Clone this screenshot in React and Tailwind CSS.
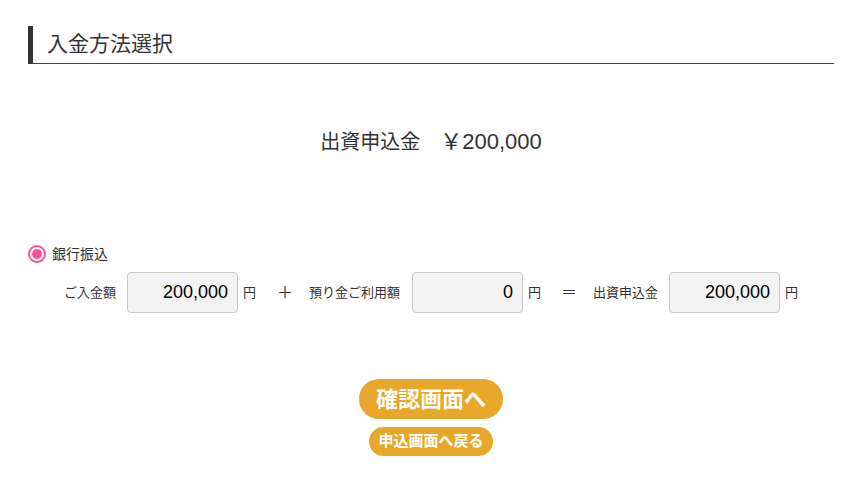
import React from 'react';

const font = { fontFamily: '"Liberation Sans", "Noto Sans CJK JP", sans-serif' };

const AmountBox = ({ value }) => (
  <div className="w-[111px] h-[41px] rounded-[4px] border border-[#c9c9c9] bg-[#f3f3f3] flex items-center justify-end pr-[9px] text-[18px] text-black">
    {value}
  </div>
);

const App = () => {
  return (
    <div className="min-h-screen bg-white text-[#333] pl-[28px] pr-[25px] pt-[26px]" style={font}>
      {/* 見出し */}
      <h1 className="border-l-[5px] border-b border-[#333] border-b-[#444] pl-[14px] h-[38px] flex items-center text-[21px] leading-none pb-[2px]">
        入金方法選択
      </h1>

      {/* 金額 */}
      <p className="mt-[64px] text-center text-[20px] leading-[28px]">
        出資申込金　<span className="text-[22px]">￥200,000</span>
      </p>

      {/* 銀行振込 */}
      <div className="mt-[88px] flex items-center h-[20px]">
        <span className="w-[18px] h-[18px] rounded-full border-2 border-[#ff4f9a] flex items-center justify-center">
          <span className="w-[10px] h-[10px] rounded-full bg-[#ff4f9a]"></span>
        </span>
        <span className="ml-[6px] text-[14px]">銀行振込</span>
      </div>

      <div className="mt-[8px] flex items-center justify-center text-[13px]">
        <span className="mr-[11px]">ご入金額</span>
        <AmountBox value="200,000" />
        <span className="ml-[5px]">円</span>
        <span className="ml-[21px] mr-[16px] text-[16px]">＋</span>
        <span className="mr-[12px]">預り金ご利用額</span>
        <AmountBox value="0" />
        <span className="ml-[5px]">円</span>
        <span className="ml-[20px] mr-[16px] text-[16px]">＝</span>
        <span className="mr-[11px]">出資申込金</span>
        <AmountBox value="200,000" />
        <span className="ml-[5px]">円</span>
      </div>

      {/* ボタン */}
      <div className="mt-[66px] flex flex-col items-center gap-[8px]">
        <button className="w-[144px] h-[40px] rounded-full bg-[#e6a72b] text-white text-[22px] font-bold">
          確認画面へ
        </button>
        <button className="w-[124px] h-[29px] rounded-full bg-[#e6a72b] text-white text-[15px] font-bold">
          申込画面へ戻る
        </button>
      </div>
    </div>
  );
};

export default App;
